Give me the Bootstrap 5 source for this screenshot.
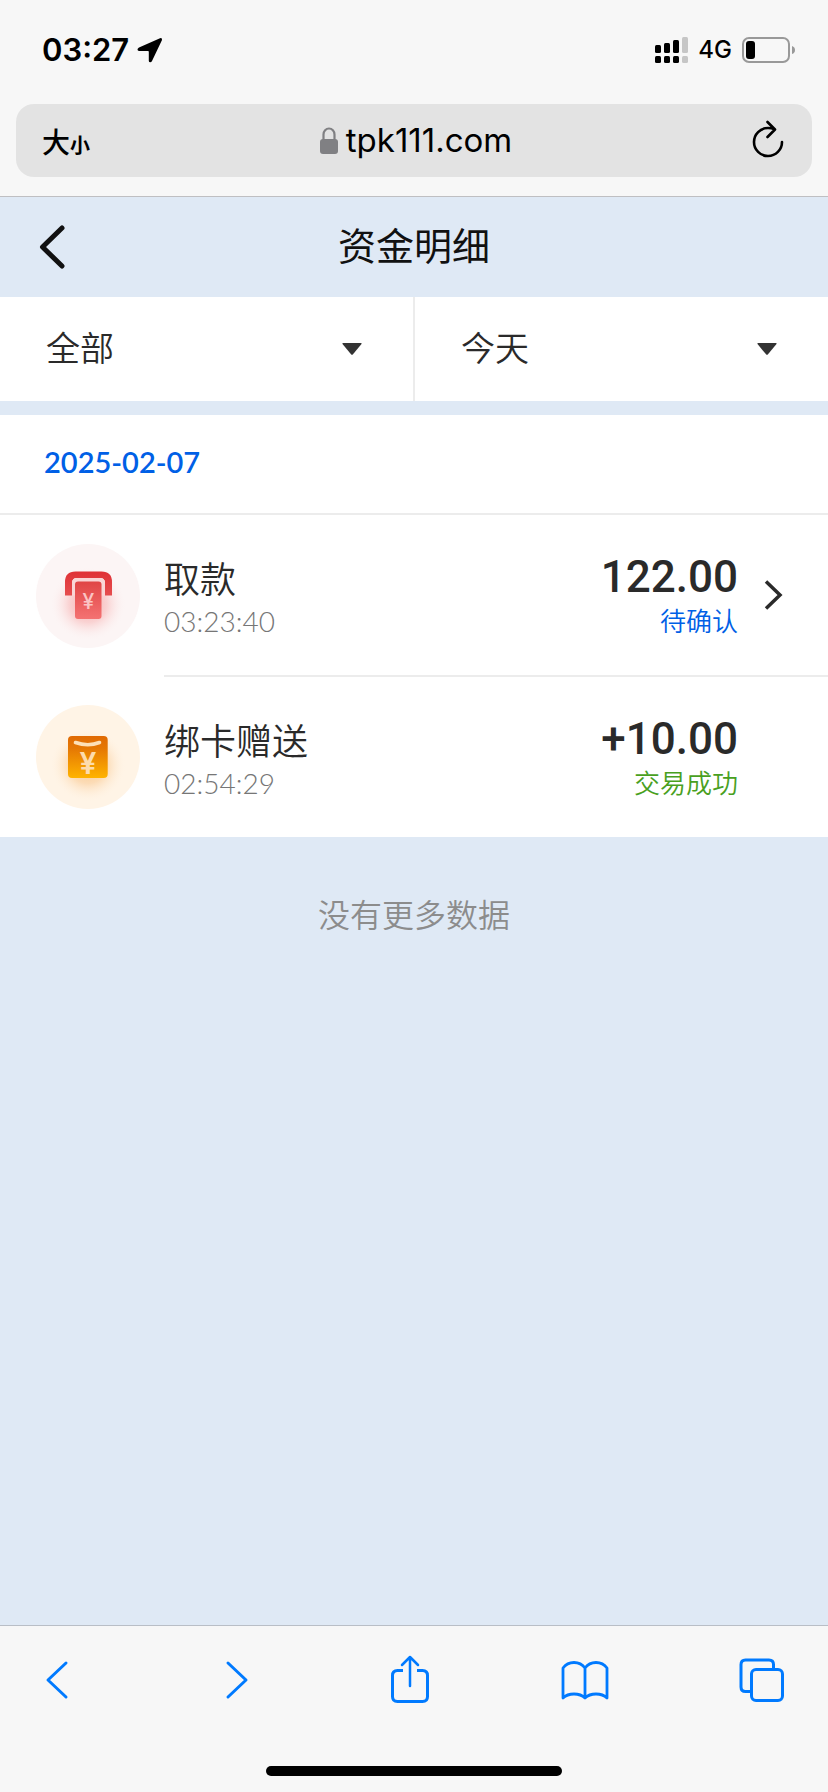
<!DOCTYPE html>
<html lang="zh-CN">
<head>
<meta charset="utf-8">
<meta name="viewport" content="width=device-width, initial-scale=1">
<title>资金明细</title>
<link href="https://cdn.jsdelivr.net/npm/bootstrap@5.3.0/dist/css/bootstrap.min.css" rel="stylesheet">
<style>
  body { background: #dfe9f5; color: #2a2a2a; font-family: Lato, "Noto Sans CJK SC", sans-serif; font-weight: 350; }
  .ui-chrome { background: #f7f7f7; color: #000; font-family: Inter, "Noto Sans CJK SC", sans-serif; }
  .status-bar { height: 104px; padding: 0 32px 4px 42px; }
  .clock { font-size: 31px; font-weight: 600; }
  .signals { gap: 10px; }
  .network { font-size: 24px; font-weight: 500; }
  .chrome-top { padding-bottom: 19px; border-bottom: 1px solid #bfbfc2; }
  .address-bar { height: 73px; margin: 0 16px; padding: 0 28px 0 26px; border-radius: 18px; background: #e3e3e3; }
  .plain-btn { padding: 0; border: 0; background: none; color: inherit; line-height: 1; }
  .side { display: flex; flex: 1 1 0; }
  .text-size { padding-top: 4px; font-size: 28px; font-weight: 500; }
  .text-size small { font-size: 20px; font-weight: 700; }
  .url { padding-left: 6px; font-size: 33px; font-weight: 400; }
  .page-header { height: 100px; padding: 0 38px; color: #111; }
  .page-title { padding-bottom: 4px; font-size: 38px; font-weight: 400; line-height: 44px; }
  .filter-select {
    height: 104px; padding: 0 52px 2px 46px; border: 0 solid #ececec; border-radius: 0;
    color: #2a2a2a; font-size: 34px; font-weight: 350; line-height: 44px;
    background: #fff url("data:image/svg+xml,%3Csvg xmlns='http://www.w3.org/2000/svg' viewBox='0 0 20 12'%3E%3Cpath d='M1 0h18q1 0 .5 1L11 11.300q-1 1-2 0L.5 1Q0 0 1 0z' fill='%23333'/%3E%3C/svg%3E") no-repeat right 51px center / 20px 12px;
  }
  .split-start { border-right-width: 1px; }
  .split-end { border-left-width: 1px; }
  .records { margin-top: 14px; background: #fff; }
  .record-date { height: 100px; padding: 0 44px 4px; border-bottom: 2px solid #ececec; color: #0060e6; font-size: 29px; font-weight: 600; }
  .record { padding-left: 36px; gap: 24px; color: inherit; text-decoration: none; }
  .record-icon { width: 104px; height: 104px; }
  .record-body { min-height: 160px; padding: 8px 44px 0 0; }
  .ruled { border-bottom: 2px solid #ececec; min-height: 162px; }
  .record-name { font-size: 36px; line-height: 44px; }
  .record-time { font-size: 28px; line-height: 40px; color: #767676; }
  .record-sum { padding-bottom: 4px; }
  .record-amount { font-family: Roboto, sans-serif; font-size: 44px; font-weight: 500; line-height: 48px; }
  .record-state { font-size: 26px; line-height: 40px; }
  .pending { color: #0060e6; }
  .done { color: #49a01e; }
  .arrow-slot { width: 46px; padding-bottom: 8px; }
  .end-note { padding-top: 56px; font-size: 32px; line-height: 44px; color: #8c8c8c; }
  .chrome-bottom { border-top: 1px solid #b9bec6; }
  .toolbar { padding: 26px 43px 0 34px; color: #007aff; }
  .home-indicator { width: 296px; height: 10px; margin: 60px auto 16px; border-radius: 5px; background: #000; }
  svg { display: block; flex: none; }
</style>
</head>
<body class="d-flex flex-column min-vh-100">

<header class="ui-chrome chrome-top">
  <div class="status-bar d-flex align-items-center justify-content-between">
    <div class="d-flex align-items-center gap-2">
      <span class="clock">03:27</span>
      <svg width="26" height="26" viewBox="0 0 26 26" aria-hidden="true"><path d="M23 1.200 2 10.500q-1.500.8-1.500 2T2 14h9q.8 0 .8.800V24q.2 1.200 1.400 1.200t1.800-1.200L25 3Q25.300.5 23 1.200z" fill="#000"/></svg>
    </div>
    <div class="signals d-flex align-items-center">
      <svg width="33" height="26" viewBox="0 0 33 26" aria-hidden="true">
        <g fill="#000"><rect y="8" width="6" height="8" rx="1.500"/><rect x="9" y="6" width="6" height="10" rx="1.500"/><rect x="18" y="3" width="6" height="13" rx="1.500"/><rect y="19" width="6" height="7" rx="1.500"/><rect x="9" y="19" width="6" height="7" rx="1.500"/><rect x="18" y="19" width="6" height="7" rx="1.500"/></g>
        <g fill="#c6c6c6"><rect x="27" width="6" height="16" rx="1.500"/><rect x="27" y="19" width="6" height="7" rx="1.500"/></g>
      </svg>
      <span class="network">4G</span>
      <svg width="54" height="26" viewBox="0 0 54 26" aria-label="电量"><rect x="1" y="1" width="46" height="24" rx="6" fill="none" stroke="#999" stroke-width="2"/><rect x="4" y="4" width="9" height="18" rx="3"/><path d="M50 9q3 1 3 4t-3 4z" fill="#999"/></svg>
    </div>
  </div>
  <div class="address-bar d-flex align-items-center">
    <div class="side"><button type="button" class="plain-btn text-size">大<small>小</small></button></div>
    <button type="button" class="plain-btn url d-flex align-items-center gap-2">
      <svg width="18" height="27" viewBox="0 0 18 27" aria-hidden="true"><rect y="12" width="18" height="15" rx="3" fill="#808083"/><path d="M3.500 13V7.500a5.500 6 0 0 1 11 0V13" fill="none" stroke="#808083" stroke-width="2.200"/></svg>
      <span>tpk111.com</span>
    </button>
    <div class="side justify-content-end">
      <button type="button" class="plain-btn pb-1" aria-label="刷新">
        <svg width="32" height="38" viewBox="0 0 32 38" fill="none" stroke="#000" stroke-width="2.600" stroke-linecap="round" stroke-linejoin="round"><path d="M30 22a14 14 0 1 1-14-14q3.500 0 6.500 1.200M15.500 2 23 9.500 15.500 17"/></svg>
      </button>
    </div>
  </div>
</header>

<main>
  <div class="page-header d-flex align-items-center">
    <div class="side"><button type="button" class="plain-btn" aria-label="返回">
      <svg width="28" height="46" viewBox="0 0 28 46" fill="none" stroke="#111" stroke-width="5" stroke-linecap="round" stroke-linejoin="round"><path d="M24 4 4.500 23 24 42"/></svg>
    </button></div>
    <h1 class="page-title m-0">资金明细</h1>
    <div class="side"></div>
  </div>

  <form class="row g-0">
    <div class="col-6"><select class="form-select filter-select split-start" aria-label="交易类型"><option>全部</option></select></div>
    <div class="col-6"><select class="form-select filter-select split-end" aria-label="日期"><option>今天</option></select></div>
  </form>

  <section class="records">
    <h2 class="record-date d-flex align-items-center m-0">2025-02-07</h2>
    <a href="#" class="record d-flex align-items-center">
      <svg class="record-icon" viewBox="0 0 104 104" aria-hidden="true">
        <defs>
          <linearGradient id="red" x2="0" y2="1"><stop stop-color="#e04545"/><stop offset="1" stop-color="#f47272"/></linearGradient>
          <linearGradient id="hood" x2="0" y2="1"><stop stop-color="#df3136"/><stop offset="1" stop-color="#e64e4f"/></linearGradient>
          <radialGradient id="redglow"><stop stop-color="#f27070" stop-opacity=".6"/><stop offset=".5" stop-color="#f48a8a" stop-opacity=".32"/><stop offset="1" stop-color="#fcf5f5" stop-opacity="0"/></radialGradient>
        </defs>
        <circle cx="52" cy="52" r="52" fill="#fcf5f5"/>
        <ellipse cx="52" cy="60" rx="38" ry="37" fill="url(#redglow)"/>
        <path d="M29 51.500V38q0-10.500 10.500-10.500h26Q76 27.500 76 38v13.500h-7V39q0-5-5-5H41q-5 0-5 5v12.500z" fill="url(#hood)"/>
        <path d="M36 51.500V39q0-5 5-5h23q5 0 5 5v12.500z" fill="#f9d6d6"/>
        <rect x="39" y="37.500" width="26.500" height="37.500" rx="3" fill="url(#red)"/>
        <text x="52.300" y="65" text-anchor="middle" font-family="Inter, sans-serif" font-size="21" font-weight="500" fill="#fbc4c4">¥</text>
      </svg>
      <div class="record-body ruled flex-grow-1 d-flex align-items-center">
        <div class="flex-grow-1"><div class="record-name">取款</div><div class="record-time">03:23:40</div></div>
        <div class="record-sum text-end"><div class="record-amount">122.00</div><div class="record-state pending">待确认</div></div>
        <div class="arrow-slot d-flex justify-content-end">
          <svg width="20" height="32" viewBox="0 0 20 32" fill="none" stroke="#2a2a2a" stroke-width="3.500"><path d="M2 2.500 16 16 2 29.500"/></svg>
        </div>
      </div>
    </a>
    <div class="record d-flex align-items-center">
      <svg class="record-icon" viewBox="0 0 104 104" aria-hidden="true">
        <defs>
          <linearGradient id="gold" x2="0" y2="1"><stop stop-color="#e06a04"/><stop offset=".3" stop-color="#e57804"/><stop offset="1" stop-color="#ffb300"/></linearGradient>
          <radialGradient id="goldglow"><stop stop-color="#f5a040" stop-opacity=".6"/><stop offset=".5" stop-color="#f7b060" stop-opacity=".35"/><stop offset="1" stop-color="#fff4e6" stop-opacity="0"/></radialGradient>
        </defs>
        <circle cx="52" cy="52" r="52" fill="#fff4e6"/>
        <ellipse cx="52" cy="60" rx="38" ry="37" fill="url(#goldglow)"/>
        <rect x="32" y="31" width="39.700" height="42" rx="4" fill="url(#gold)"/>
        <path d="M39.500 37.500q12.500 4.500 24 0" fill="none" stroke="#fde0b8" stroke-width="3.600" stroke-linecap="round"/>
        <text x="52" y="68.500" text-anchor="middle" font-family="Inter, sans-serif" font-size="30" font-weight="600" fill="#fddcae">¥</text>
      </svg>
      <div class="record-body flex-grow-1 d-flex align-items-center">
        <div class="flex-grow-1"><div class="record-name">绑卡赠送</div><div class="record-time">02:54:29</div></div>
        <div class="record-sum text-end"><div class="record-amount">+10.00</div><div class="record-state done">交易成功</div></div>
        <div class="arrow-slot"></div>
      </div>
    </div>
  </section>
  <p class="end-note text-center m-0">没有更多数据</p>
</main>

<footer class="ui-chrome chrome-bottom mt-auto">
  <nav class="toolbar d-flex align-items-center justify-content-between" aria-label="浏览器工具栏">
    <button type="button" class="plain-btn" aria-label="后退"><svg width="46" height="54" viewBox="0 0 46 54" fill="none" stroke="currentColor" stroke-width="3" stroke-linecap="round" stroke-linejoin="round"><path d="M32 11 14 28l18 17"/></svg></button>
    <button type="button" class="plain-btn" aria-label="前进"><svg width="46" height="54" viewBox="0 0 46 54" fill="none" stroke="currentColor" stroke-width="3" stroke-linecap="round" stroke-linejoin="round"><path d="m18 11 18 17-18 17"/></svg></button>
    <button type="button" class="plain-btn" aria-label="分享"><svg width="46" height="54" viewBox="0 0 46 54" fill="none" stroke="currentColor" stroke-width="3" stroke-linejoin="round"><path d="M17 18.500H11.500q-5 0-5 5v21q0 5 5 5h25q5 0 5-5v-21q0-5-5-5H31"/><path stroke-width="2.500" stroke-linecap="round" d="M24 34V5M16 13l8-8 8 8"/></svg></button>
    <button type="button" class="plain-btn" aria-label="书签"><svg width="48" height="54" viewBox="0 0 48 54" fill="none" stroke="currentColor" stroke-width="2.800" stroke-linejoin="round"><path d="M24 46V16Q20 10.500 13 10.500T2 16v30Q6 42 13 42t11 4q4-4 11-4t11 4V16q-4-5.500-11-5.500T24 16"/></svg></button>
    <button type="button" class="plain-btn" aria-label="标签页"><svg width="46" height="54" viewBox="0 0 46 54" fill="none" stroke="currentColor" stroke-width="3"><rect x="12.500" y="17.500" width="31" height="31" rx="4.500"/><path d="M34.500 17V12.500q0-4.500-4.500-4.500H6.500Q2 8 2 12.500V35q0 4.500 4.500 4.500H12"/></svg></button>
  </nav>
  <div class="home-indicator"></div>
</footer>

<script src="https://cdn.jsdelivr.net/npm/bootstrap@5.3.0/dist/js/bootstrap.bundle.min.js"></script>
</body>
</html>
